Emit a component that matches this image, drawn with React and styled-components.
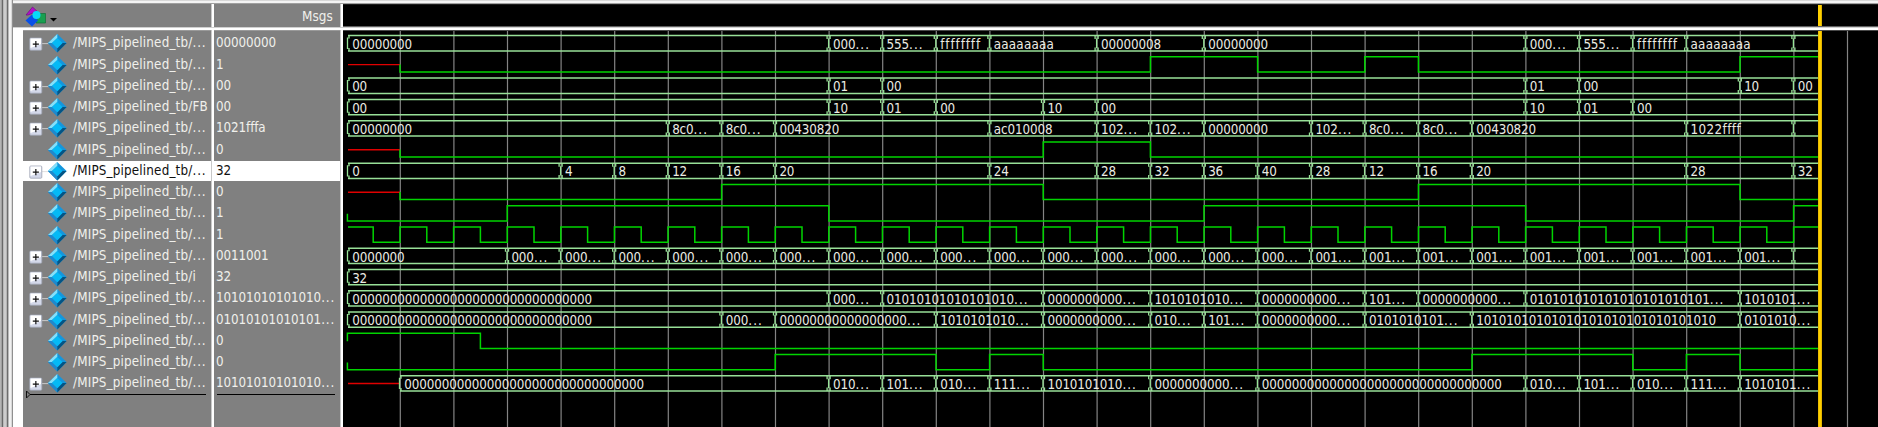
import React from "react";
import styled, { createGlobalStyle } from "styled-components";

const GlobalStyle = createGlobalStyle`
  * { box-sizing: border-box; }
  body { margin: 0; background: #808080; overflow: hidden; }
`;

const PITCH = 21.26;
const STEP = 53.6;
const START = 348;
const END = 1818;
const OFFSET = 343;
const FONT = '"DejaVu Sans Condensed", "DejaVu Sans", "Noto Sans", sans-serif';

const Z32 = "0".repeat(32);
const zeros = (n) => "0".repeat(n) + "...";
const NAME = "/MIPS_pipelined_tb/";

const counter = [["s", "0000000"]];
for (let k = 2; k <= 25; k++) counter.push([k, k < 17 ? "000..." : "001..."]);
counter.push([26, ""]);

const clock = [["s", 1], [-0.5, 0]];
for (let k = 0; k <= 26; k++) {
  clock.push([k, 1]);
  if (k < 26) clock.push([k + 0.5, 0]);
}

const SIGNALS = [
  { value: "00000000", bus: [["s", "00000000"], [8, "000..."], [9, "555..."], [10, "ffffffff"], [11, "aaaaaaaa"], [13, "00000008"], [15, "00000000"], [21, "000..."], [22, "555..."], [23, "ffffffff"], [24, "aaaaaaaa"], [26, ""]] },
  { value: "1", unknown: true, bit: [[0, 0], [14, 1], [16, 0], [18, 1], [19, 0], [25, 1]] },
  { value: "00", bus: [["s", "00"], [8, "01"], [9, "00"], [21, "01"], [22, "00"], [25, "10"], [26, "00"]] },
  { leaf: "FB", value: "00", bus: [["s", "00"], [8, "10"], [9, "01"], [10, "00"], [12, "10"], [13, "00"], [21, "10"], [22, "01"], [23, "00"]] },
  { value: "1021fffa", bus: [["s", "00000000"], [5, "8c0..."], [6, "8c0..."], [7, "00430820"], [11, "ac010008"], [13, "102..."], [14, "102..."], [15, "00000000"], [17, "102..."], [18, "8c0..."], [19, "8c0..."], [20, "00430820"], [24, "1022ffff"], [26, ""]] },
  { value: "0", unknown: true, bit: [[0, 0], [12, 1], [14, 0]] },
  { value: "32", selected: true, bus: [["s", "0"], [3, "4"], [4, "8"], [5, "12"], [6, "16"], [7, "20"], [11, "24"], [13, "28"], [14, "32"], [15, "36"], [16, "40"], [17, "28"], [18, "12"], [19, "16"], [20, "20"], [24, "28"], [26, "32"]] },
  { value: "0", unknown: true, bit: [[0, 0], [6, 1], [12, 0], [19, 1], [25, 0]] },
  { value: "1", tick: true, bit: [["s", 0], [2, 1], [8, 0], [15, 1], [21, 0], [26, 1]] },
  { value: "1", bit: clock },
  { value: "0011001", bus: counter },
  { leaf: "i", value: "32", bus: [["s", "32"]] },
  { value: "10101010101010...", bus: [["s", Z32], [8, "000..."], [9, "01010101010101010..."], [12, zeros(10)], [14, "1010101010..."], [16, zeros(10)], [18, "101..."], [19, zeros(10)], [21, "01".repeat(12) + "..."], [25, "1010101..."]] },
  { value: "01010101010101...", bus: [["s", Z32], [6, "000..."], [7, zeros(17)], [10, "1010101010..."], [12, zeros(10)], [14, "010..."], [15, "101..."], [16, zeros(10)], [18, "0101010101..."], [20, "10".repeat(16)], [25, "0101010..."]] },
  { value: "0", tick: true, bit: [["s", 1], [1.5, 0]] },
  { value: "0", tick: true, bit: [["s", 0], [7, 1], [10, 0], [11, 1], [12, 0], [20, 1], [23, 0], [24, 1], [25, 0]] },
  { value: "10101010101010...", unknown: true, bus: [[0, Z32], [8, "010..."], [9, "101..."], [10, "010..."], [11, "111..."], [12, "1010101010..."], [14, zeros(10)], [16, Z32], [21, "010..."], [22, "101..."], [23, "010..."], [24, "111..."], [25, "1010101..."]] },
];

const Window = styled.div`
  width: 1878px;
  height: 427px;
  display: flex;
  flex-direction: column;
  overflow: hidden;
  background: #f4f4f4;
  font-family: ${FONT};
  font-variant-ligatures: none;
`;
const Body = styled.div`
  flex: 1;
  display: flex;
  min-height: 0;
`;
const Frame = styled.div`
  width: 13px;
  flex: none;
  background: linear-gradient(90deg, #b4b4b4 0 1px, #a0a0a0 1px 2px, #686868 2px 3px, #b8b8b8 3px 4px, #cccccc 4px 6px, #b4b4b4 6px 7px, #6c6c6c 7px 8px, #b8b8b8 8px 9px, #f0f0f0 9px 11px, #d8d8d8 11px 12px, #909090 12px 13px);
`;
const Main = styled.div`
  flex: 1;
  display: flex;
  flex-direction: column;
  min-width: 0;
`;
const TopEdge = styled.div`
  height: 4px;
  flex: none;
  background: linear-gradient(#d8d8d8 0 1px, #f4f4f4 1px 3px, #a0a0a0 3px 4px);
`;
const Header = styled.div`
  height: 23px;
  flex: none;
  display: flex;
  background: #808080;
`;
const Rule = styled.div`
  height: 3px;
  flex: none;
  background: linear-gradient(#d0d0d0 0 1px, #ffffff 1px 3px);
`;
const Columns = styled.div`
  flex: 1;
  display: flex;
  min-height: 0;
`;
const Divider = styled.div`
  width: 3px;
  flex: none;
  background: linear-gradient(90deg, #c8c8c8 0 1px, #ffffff 1px 3px);
`;
const HeaderName = styled.div`
  width: 198px;
  flex: none;
  display: flex;
  align-items: flex-start;
  padding: 2px 0 0 12px;
`;
const HeaderValue = styled.div`
  width: 126px;
  flex: none;
  padding-right: 7px;
  text-align: right;
  font-size: 13.4px;
  line-height: 26px;
  letter-spacing: 0.1px;
  color: #f0f0ec;
`;
const HeaderWave = styled.div`
  flex: 1;
  display: flex;
  padding-left: 1475px;
  background: #000;
  border-top: 1px solid #1c1c1c;
  border-bottom: 1px solid #606060;
`;
const HeaderCursor = styled.div`
  width: 4px;
  background: linear-gradient(90deg, #b89400 0 0.5px, #ffd000 0.5px 3px, #b89400);
`;
const Gutter = styled.div`
  width: 10px;
  flex: none;
  background: #fff;
`;
const Column = styled.div`
  width: ${(p) => p.$width}px;
  flex: none;
  padding-top: 2.3px;
  background: #808080;
  border-top: 1px solid #9a9a9a;
  overflow: hidden;
`;
const Row = styled.div`
  height: 20.26px;
  margin-bottom: 1px;
  display: flex;
  align-items: center;
  white-space: nowrap;
  font-size: 13.3px;
  line-height: 20px;
  color: ${(p) => (p.$selected ? "#101010" : "#f0f0ec")};
  background: ${(p) => (p.$selected ? "#ffffff" : "transparent")};
`;
const Branch = styled.svg`
  width: 49px;
  height: 20px;
  flex: none;
`;
const Name = styled.span`
  padding-left: 1px;
  letter-spacing: 0.18px;
`;
const Value = styled.span`
  padding-left: 2px;
  letter-spacing: -0.1px;
`;
const Dots = styled.span`
  letter-spacing: 0.9px;
`;
const InsertRule = styled.svg`
  display: block;
  width: 100%;
  height: 9px;
  margin-top: -5px;
`;
const Chart = styled.svg`
  display: block;
  flex: 1;
  height: 397px;
  background: #000;
`;
const ChartText = styled.text`
  font-family: ${FONT};
  font-size: 13.3px;
  fill: #ecece4;
`;

const ToolIcon = () => (
  <svg width="46" height="23" viewBox="0 0 46 23">
    <path d="M1 9 L7.5 1 L15 8 L12 11 L8 7 L3 9 Z" fill="#b010c8" stroke="#701080" strokeWidth="0.7" />
    <path d="M13 7.5 H20.5 V17 H11 Z" fill="#18a050" stroke="#107038" strokeWidth="0.7" />
    <path d="M7 8.5 L13 14.5 L7 20.5 L0.5 14.5 Z" fill="#0850e8" />
    <circle cx="11.5" cy="9" r="4" fill="#08dcf8" />
    <path d="M25 12 H32 L28.5 15.5 Z" fill="#000" />
  </svg>
);

const SignalIcon = ({ expandable, selected }) => (
  <Branch viewBox="0 0 49 20">
    {expandable && (
      <>
        <path d="M19 10.6 H26" stroke={selected ? "#e0e0e0" : "#c8c8c8"} />
        <rect x="6.8" y="5" width="12" height="12.2" rx="1" fill="#d4d9ea" stroke="#a0a4b4" strokeWidth="0.8" />
        <path d="M7.5 5.5 H18 V11 L7.5 15 Z" fill="#fff" />
        <path d="M9.8 11.2 H15.9 M12.85 8.1 V14.3" stroke="#101010" strokeWidth="1.2" />
      </>
    )}
    <path d="M34.3 0.9 L43.6 10.1 L34.3 19.4 L25 10.1 Z" fill="#1496dc" />
    <path d="M34.3 0.9 L25 10.1 H29 L34.3 5 Z" fill="#84e0fa" />
    <path d="M25 10.1 L34.3 19.4 V15.2 L29 10.1 Z" fill="#2088cc" />
    <path d="M34.3 19.4 L43.6 10.1 H39.5 L34.3 15.2 Z" fill="#045484" />
    <path d="M34.3 5 L39.5 10.1 L34.3 15.2 L29 10.1 Z" fill="#04baf6" />
  </Branch>
);

const Clipped = ({ text }) => {
  const head = text.replace("...", "");
  return <>{head}{head !== text && <Dots>...</Dots>}</>;
};

const at = (k) => (k === "s" ? START : 400 + STEP * k) - OFFSET;

const widthOf = (text) =>
  [...text].reduce((w, c) => w + (c === "f" ? 5 : c === "c" ? 6.3 : 7.5), 0);

const BusLabel = ({ x, y, text }) => {
  if (!text) return null;
  const head = text.replace("...", "");
  const width = widthOf(head);
  return (
    <ChartText y={y}>
      <tspan x={x} textLength={width}>{head}</tspan>
      {head !== text && <tspan x={x + width} textLength="13.5">...</tspan>}
    </ChartText>
  );
};

const BusWave = ({ top, events }) => {
  const bottom = top + 15.3;
  const end = END - OFFSET;
  return (
    <g>
      <path d={`M${at(events[0][0])} ${top} H${end} M${at(events[0][0])} ${bottom} H${end}`} stroke="#98e098" strokeWidth="1.5" />
      {events.map(([k, text], i) => {
        const x = at(k);
        return (
          <g key={i}>
            <path
              d={i === 0
                ? `M${x + 1} ${top} V${top + 3} M${x - 0.5} ${top + 2} V${bottom - 2} M${x + 1} ${bottom - 3} V${bottom}`
                : `M${x - 0.2} ${top + 3} V${bottom - 3} M${x - 1.7} ${top} V${top + 3.5} M${x + 1.3} ${top} V${top + 3.5} M${x - 1.7} ${bottom - 3.5} V${bottom} M${x + 1.3} ${bottom - 3.5} V${bottom}`}
              stroke="#98e498"
              strokeWidth="1.3"
            />
            <BusLabel x={x + 4.2} y={top + 13.3} text={text} />
          </g>
        );
      })}
    </g>
  );
};

const BitWave = ({ top, events, tick }) => {
  const level = (v) => (v ? top : top + 15.2);
  const [first, ...rest] = events;
  const x0 = at(first[0]);
  let d = first[0] === "s"
    ? tick ? `M${x0 - 0.6} ${top + 8} V${level(first[1])}` : `M${x0} ${level(first[1])}`
    : `M${x0} ${top + 7.6} V${level(first[1])}`;
  rest.forEach(([k, v]) => { d += ` H${at(k)} V${level(v)}`; });
  d += ` H${END - OFFSET}`;
  return <path d={d} fill="none" stroke="#00d400" strokeWidth="1.5" />;
};

const WaveChart = () => (
  <Chart viewBox="0 0 1535 397" preserveAspectRatio="xMinYMin slice">
    {Array.from({ length: 28 }, (_, k) => (
      <path key={k} d={`M${at(k) + 0.3} 0 V397`} stroke="#848484" strokeWidth="1.2" />
    ))}
    {SIGNALS.map((s, i) => {
      const top = 5.6 + PITCH * i;
      return (
        <g key={i}>
          {s.unknown && <path d={`M${START - OFFSET} ${top + 7.8} H${at(0)}`} stroke="#e00000" strokeWidth="1.4" />}
          {s.bus ? <BusWave top={top} events={s.bus} /> : <BitWave top={top} events={s.bit} tick={s.tick} />}
        </g>
      );
    })}
    <path d="M0 0.5 H1535" stroke="#484848" />
    <rect x="1475" y="1" width="4" height="396" fill="#d8aa00" />
    <rect x="1475.5" y="1" width="2.8" height="396" fill="#ffd000" />
  </Chart>
);

export default function App() {
  return (
    <Window>
      <GlobalStyle />
      <Body>
        <Frame />
        <Main>
          <TopEdge />
          <Header>
            <HeaderName><ToolIcon /></HeaderName>
            <Divider />
            <HeaderValue>Msgs</HeaderValue>
            <Divider />
            <HeaderWave><HeaderCursor /></HeaderWave>
          </Header>
          <Rule />
          <Columns>
            <Gutter />
            <Column $width={188}>
              {SIGNALS.map((s, i) => (
                <Row key={i} $selected={s.selected}>
                  <SignalIcon expandable={!!s.bus} selected={s.selected} />
                  <Name><Clipped text={NAME + (s.leaf || "...")} /></Name>
                </Row>
              ))}
              <InsertRule>
                <path d="M3.5 1 V8 L7 4.5 Z" fill="none" stroke="#101010" />
                <path d="M7 4.5 H183" stroke="#000" strokeWidth="1.2" />
              </InsertRule>
            </Column>
            <Divider />
            <Column $width={126}>
              {SIGNALS.map((s, i) => (
                <Row key={i} $selected={s.selected}><Value><Clipped text={s.value} /></Value></Row>
              ))}
              <InsertRule>
                <path d="M3 4.5 H121" stroke="#000" strokeWidth="1.2" />
              </InsertRule>
            </Column>
            <Divider />
            <WaveChart />
          </Columns>
        </Main>
      </Body>
    </Window>
  );
}
